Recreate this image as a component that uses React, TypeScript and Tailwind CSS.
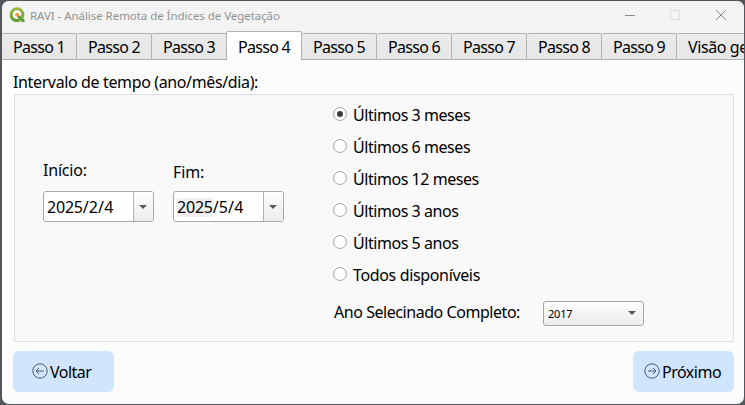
import React from "react";

const tabs = ["Passo 1", "Passo 2", "Passo 3", "Passo 4", "Passo 5", "Passo 6", "Passo 7", "Passo 8", "Passo 9"];

const options = [
  "Últimos 3 meses",
  "Últimos 6 meses",
  "Últimos 12 meses",
  "Últimos 3 anos",
  "Últimos 5 anos",
  "Todos disponíveis",
];

function Logo() {
  return (
    <svg width="17" height="16" viewBox="0 0 17 16" className="mb-[2px] shrink-0">
      <defs>
        <linearGradient id="ring" x1="0" y1="0" x2="0" y2="1">
          <stop offset="0" stopColor="#9ab83a" />
          <stop offset="1" stopColor="#5c9e35" />
        </linearGradient>
      </defs>
      <circle cx="8" cy="7.7" r="5.9" fill="#fff" stroke="url(#ring)" strokeWidth="3" />
      <path d="M8.2 8.2h3L15.8 12.6v2.6h-2.9L8.2 10.8z" fill="#5c9e35" stroke="#f3f3f3" strokeWidth=".5" />
      <circle cx="8.1" cy="7.7" r="2" fill="#f0954a" />
    </svg>
  );
}

function Caret() {
  return (
    <svg width="8" height="4" viewBox="0 0 8 4" className="shrink-0">
      <path d="M0 0h8L4 4z" fill="#595959" />
    </svg>
  );
}

function Arrow({ right = false }: { right?: boolean }) {
  return (
    <svg width="16" height="16" viewBox="0 0 16 16" fill="none" stroke="#4d5a68" strokeWidth="1" className="mb-[2px] shrink-0">
      <circle cx="8" cy="8" r="7.2" />
      <path d={right ? "M4 8h8M9 5l3 3-3 3" : "M12 8H4M7 5L4 8l3 3"} />
    </svg>
  );
}

function DateField({ year, rest, active = false }: { year: string; rest: string; active?: boolean }) {
  return (
    <div className="flex h-[31px] w-[111px] rounded-[3px] border border-[#a9a9a9] bg-white">
      <div className="flex flex-1 items-center pt-px pl-[3px] leading-[19px]">
        <span className={active ? "bg-[#f0f0f0] tracking-[-0.2px]" : "tracking-[-0.2px]"}>{year}</span>
        <span className="tracking-[0.1px]">{rest}</span>
      </div>
      <div className="flex w-5 items-center justify-center rounded-r-[2px] border-l border-[#b4b4b4] bg-gradient-to-b from-[#fdfdfd] to-[#ececec] pr-[2px]">
        <Caret />
      </div>
    </div>
  );
}

export default function App() {
  return (
    <div className="h-[405px] w-[745px] overflow-hidden bg-[#53575b] pt-px pr-px pb-px pl-[2px] font-['Noto_Sans',sans-serif] text-[16px] leading-5 whitespace-nowrap text-black">
      <div className="flex h-[403px] flex-col overflow-hidden rounded-[7px] bg-[#fcfcfc]">
        <header className="flex h-[30px] shrink-0 items-center bg-[#f3f3f3] pl-[7px]">
          <Logo />
          <span className="mb-px ml-[4px] text-[11.5px] tracking-[-0.05px] text-[#929292]">RAVI - Análise Remota de Índices de Vegetação</span>
          <svg width="104" height="12" viewBox="0 0 104 12" className="mr-[16px] mb-[2px] ml-auto" fill="none">
            <path d="M1 6.5h10" stroke="#8a8a8a" />
            <rect x="46.5" y="1.5" width="9" height="9" stroke="#dedede" />
            <path d="M92 1l10 10M102 1L92 11" stroke="#8a8a8a" />
          </svg>
        </header>
        <nav className="flex h-[29px] shrink-0 items-end overflow-hidden bg-[#f3f3f3] tracking-[-0.7px]">
          {tabs.map((label, i) =>
            i === 3 ? (
              <div key={label} className="-ml-px h-[29px] w-[76px] shrink-0 rounded-t-[2px] border border-b-0 border-[#b1b1b1] bg-gradient-to-b from-white to-[#fcfcfc] pt-[5px] pl-[11px]">
                {label}
              </div>
            ) : (
              <div key={label} className="h-[27px] w-[75px] shrink-0 rounded-t-[2px] border-t border-r border-b border-[#b1b1b1] bg-gradient-to-b from-[#ebebeb] to-[#e6e6e6] pt-[3px] pl-[11px]">
                {label}
              </div>
            ),
          )}
          <div className="h-[27px] flex-1 rounded-tl-[2px] border-t border-b border-[#b1b1b1] bg-gradient-to-b from-[#ebebeb] to-[#e6e6e6] pt-[3px] pl-[11px] tracking-[-0.4px]">Visão geral</div>
        </nav>
        <main className="flex flex-1 flex-col pr-[10px] pl-[11px]">
          <h1 className="mt-[12px] h-[22px] tracking-[-0.37px]">Intervalo de tempo (ano/mês/dia):</h1>
          <section className="ml-px flex h-[248px] w-[720px] shrink-0 border border-[#dfdfdf] bg-[#f9f9f9] tracking-[-0.4px]">
            <div className="ml-[28px] w-[130px] pt-[65px]">
              <div className="mb-[11px] tracking-[-0.2px]">Início:</div>
              <DateField year="2025" rest="/2/4" />
            </div>
            <div className="w-[160px] pt-[67px]">
              <div className="mb-[9px] tracking-[-0.1px]">Fim:</div>
              <DateField year="2025" rest="/5/4" active />
            </div>
            <div className="pt-[4px]">
              {options.map((o, i) => (
                <label key={o} className="flex h-8 items-center">
                  <span className="mr-[6px] mb-[2px] flex h-[14px] w-[14px] items-center justify-center rounded-full border border-[#a5a5a5] bg-white">
                    {i === 0 && <span className="h-[6px] w-[6px] rounded-full bg-[#3c3c3c]" />}
                  </span>
                  <span className={i === 5 ? "tracking-[-0.35px]" : "tracking-[-0.45px]"}>{o}</span>
                </label>
              ))}
              <div className="mt-[9px] flex h-[26px] items-center">
                <span className="mb-[2px] ml-px w-[209px] tracking-[-0.45px]">Ano Selecinado Completo:</span>
                <div className="flex h-[25px] w-[101px] items-center justify-between rounded-[3px] border border-[#a5a5a5] bg-gradient-to-b from-[#fefefe] to-[#ececec] pr-[7px] pl-1 text-[11px] tracking-[-0.2px]">
                  <span className="mt-px">2017</span> <Caret />
                </div>
              </div>
            </div>
          </section>
          <footer className="mt-[9px] flex justify-between tracking-[-0.5px]">
            <button className="flex h-[41px] w-[101px] items-center gap-[2px] rounded-[6px] bg-[#d0e6ff] pl-[19px]"><Arrow />Voltar</button>
            <button className="flex h-[41px] w-[101px] items-center gap-[2px] rounded-[6px] bg-[#d0e6ff] pl-[11px]"><Arrow right />Próximo</button>
          </footer>
        </main>
      </div>
    </div>
  );
}
